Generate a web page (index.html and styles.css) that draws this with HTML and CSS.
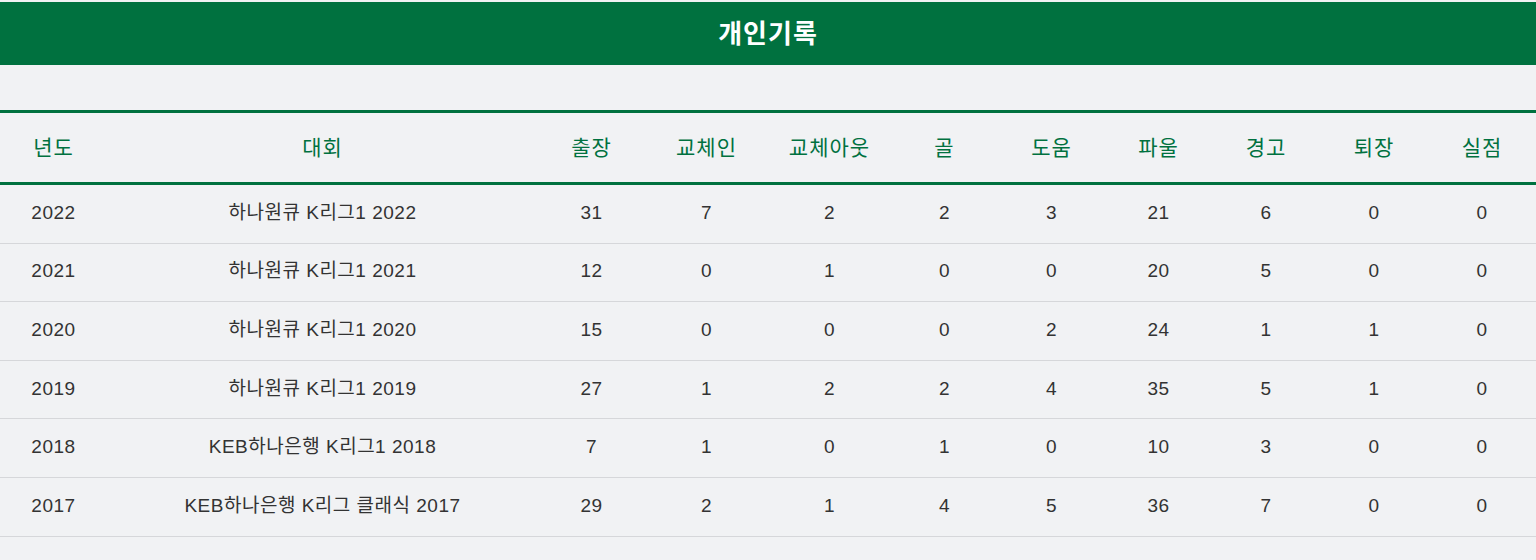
FILE: index.html
```html
<!DOCTYPE html>
<html lang="ko">
<head>
<meta charset="utf-8">
<title>개인기록</title>
<link rel="stylesheet" href="styles.css">
</head>
<body>
<div class="page">
  <h2 class="title-bar">개인기록</h2>
  <div class="spacer"></div>
  <table class="record">
    <colgroup>
      <col class="c-year"><col class="c-comp"><col class="c-n"><col class="c-w"><col class="c-w">
      <col class="c-n"><col class="c-n"><col class="c-n"><col class="c-n2"><col class="c-n2"><col class="c-n2">
    </colgroup>
    <thead>
      <tr><th>년도</th><th>대회</th><th>출장</th><th>교체인</th><th>교체아웃</th><th>골</th><th>도움</th><th>파울</th><th>경고</th><th>퇴장</th><th>실점</th></tr>
    </thead>
    <tbody>
      <tr><td>2022</td><td>하나원큐 K리그1 2022</td><td>31</td><td>7</td><td>2</td><td>2</td><td>3</td><td>21</td><td>6</td><td>0</td><td>0</td></tr>
      <tr><td>2021</td><td>하나원큐 K리그1 2021</td><td>12</td><td>0</td><td>1</td><td>0</td><td>0</td><td>20</td><td>5</td><td>0</td><td>0</td></tr>
      <tr><td>2020</td><td>하나원큐 K리그1 2020</td><td>15</td><td>0</td><td>0</td><td>0</td><td>2</td><td>24</td><td>1</td><td>1</td><td>0</td></tr>
      <tr><td>2019</td><td>하나원큐 K리그1 2019</td><td>27</td><td>1</td><td>2</td><td>2</td><td>4</td><td>35</td><td>5</td><td>1</td><td>0</td></tr>
      <tr><td>2018</td><td>KEB하나은행 K리그1 2018</td><td>7</td><td>1</td><td>0</td><td>1</td><td>0</td><td>10</td><td>3</td><td>0</td><td>0</td></tr>
      <tr><td>2017</td><td>KEB하나은행 K리그 클래식 2017</td><td>29</td><td>2</td><td>1</td><td>4</td><td>5</td><td>36</td><td>7</td><td>0</td><td>0</td></tr>
    </tbody>
  </table>
</div>
</body>
</html>
```

FILE: styles.css
```css
html, body {
  margin: 0;
  padding: 0;
  background: #f1f2f4;
}
body {
  font-family: "Liberation Sans", "Noto Sans CJK KR", sans-serif;
  color: #2b2b2b;
}
.page {
  padding-top: 2px;
}
.title-bar {
  margin: 0;
  height: 63px;
  background: #00713f;
  color: #ffffff;
  font-family: "Noto Sans CJK KR", sans-serif;
  font-size: 26px;
  font-weight: 700;
  letter-spacing: 1px;
  line-height: 60px;
  text-align: center;
}
.spacer {
  height: 45px;
}
.record {
  width: 1536px;
  border-collapse: collapse;
  table-layout: fixed;
}
.c-year { width: 107px; }
.c-comp { width: 431px; }
.c-n { width: 107px; }
.c-w { width: 123px; }
.c-n2 { width: 108px; }
.record thead th {
  height: 65px;
  padding: 0 0 4px;
  border-top: 3px solid #00713f;
  border-bottom: 3px solid #00713f;
  color: #00713f;
  font-family: "Noto Sans CJK KR", sans-serif;
  font-size: 21px;
  font-weight: 400;
  letter-spacing: 1px;
  line-height: 24px;
  text-align: center;
  vertical-align: middle;
}
.record tbody td {
  height: 55.6px;
  padding: 0 0 2px;
  border-bottom: 1px solid #d6d7da;
  color: #333333;
  font-size: 19px;
  font-weight: 400;
  letter-spacing: 0.5px;
  line-height: 20px;
  text-align: center;
  vertical-align: middle;
}
```
